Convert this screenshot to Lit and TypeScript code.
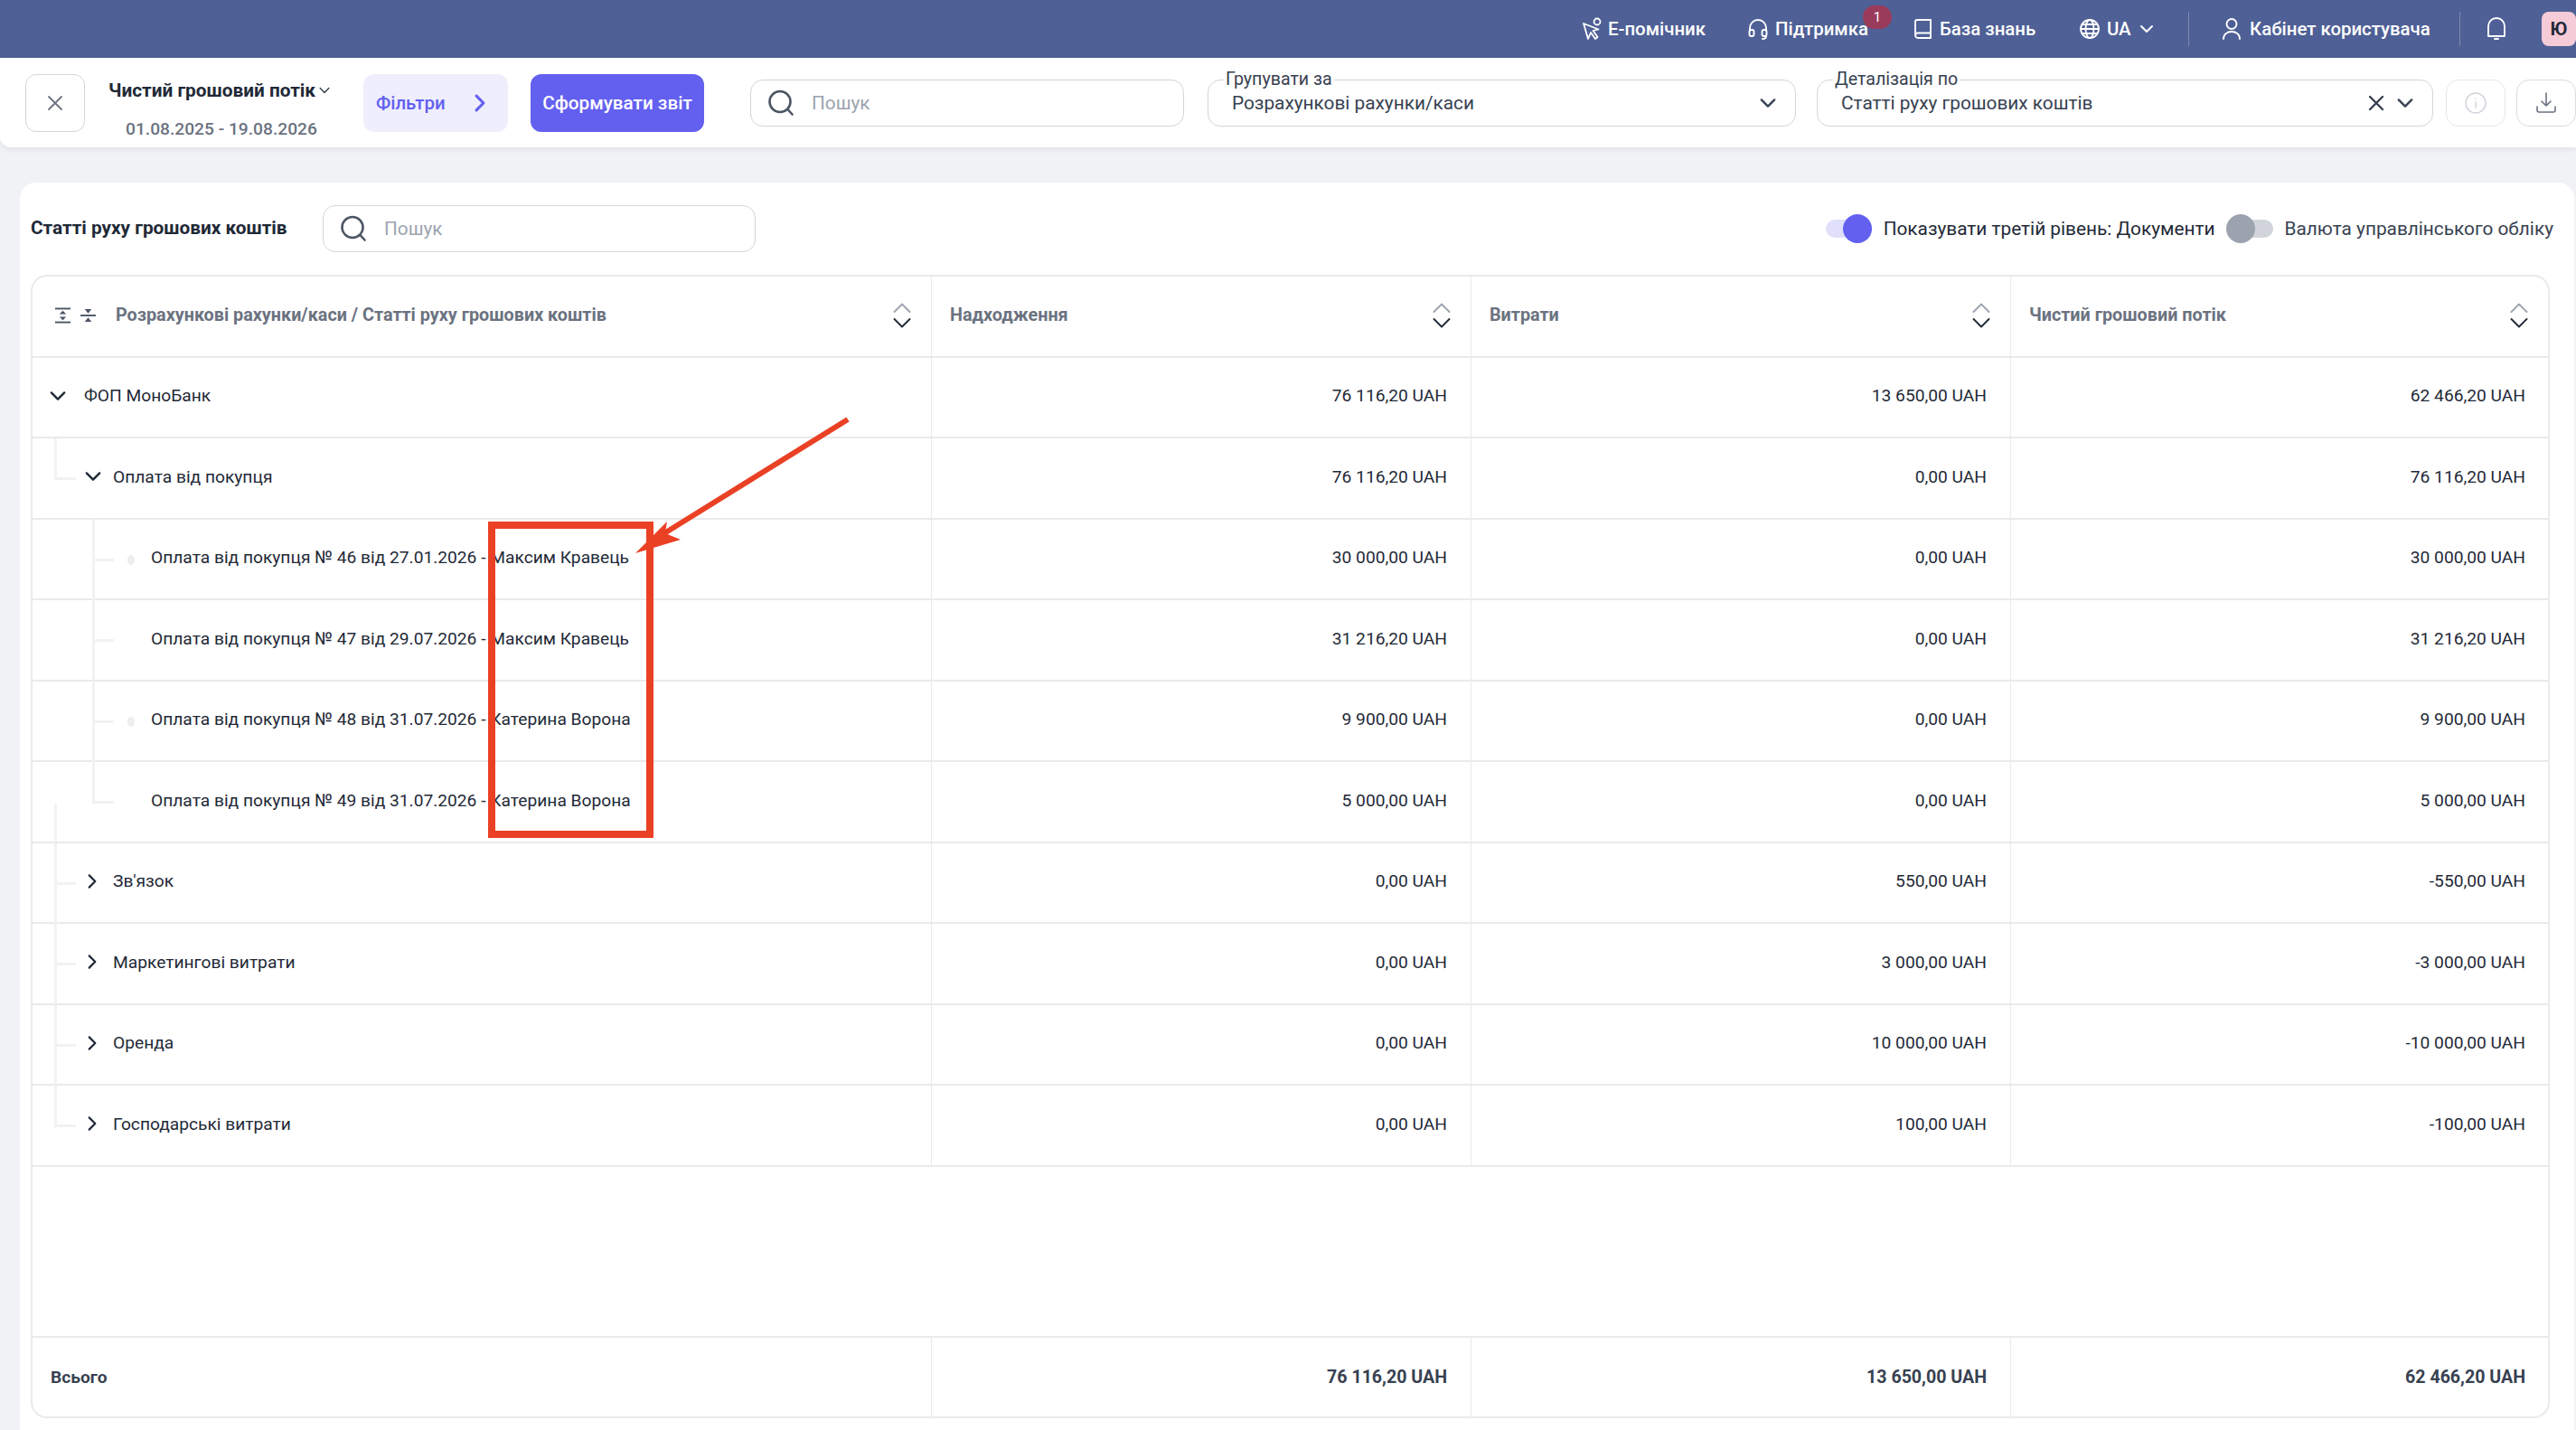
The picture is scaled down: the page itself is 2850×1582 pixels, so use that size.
import { LitElement, html, css, svg } from "lit";
import { customElement } from "lit/decorators.js";

const chevDown = (s = 20, w = 2) => html`<svg class="ic" width=${s} height=${s} viewBox="0 0 20 20" fill="none" stroke="currentColor" stroke-width=${w} stroke-linecap="round" stroke-linejoin="round"><path d="M4 7l6 6 6-6"/></svg>`;
const chevRight = (s = 20, w = 2) => html`<svg class="ic" width=${s} height=${s} viewBox="0 0 20 20" fill="none" stroke="currentColor" stroke-width=${w} stroke-linecap="round" stroke-linejoin="round"><path d="M7 4l6 6-6 6"/></svg>`;
const searchIcon = html`<svg class="ic" width="32" height="32" viewBox="0 0 32 32" fill="none" stroke="#4b5563" stroke-width="2.6" stroke-linecap="round"><circle cx="15" cy="14.5" r="11.5"/><path d="M23.5 23l5 5.5"/></svg>`;
const sortIcon = html`<svg class="ic" width="20" height="28" viewBox="0 0 20 28" fill="none" stroke-width="1.9" stroke-linecap="round" stroke-linejoin="round"><path d="M1.5 10L10 1.500l8.500 8.500" stroke="#9ca3af"/><path d="M1.5 18l8.500 8.500 8.500-8.500" stroke="#1f2937"/></svg>`;

type Row = { label: string; a: string; b: string; c: string; level: number; icon?: "down" | "right"; dot?: boolean };
const rows: Row[] = [
  { label: "ФОП МоноБанк", a: "76 116,20 UAH", b: "13 650,00 UAH", c: "62 466,20 UAH", level: 0, icon: "down" },
  { label: "Оплата від покупця", a: "76 116,20 UAH", b: "0,00 UAH", c: "76 116,20 UAH", level: 1, icon: "down" },
  { label: "Оплата від покупця № 46 від 27.01.2026 - Максим Кравець", a: "30 000,00 UAH", b: "0,00 UAH", c: "30 000,00 UAH", level: 2, dot: true },
  { label: "Оплата від покупця № 47 від 29.07.2026 - Максим Кравець", a: "31 216,20 UAH", b: "0,00 UAH", c: "31 216,20 UAH", level: 2 },
  { label: "Оплата від покупця № 48 від 31.07.2026 - Катерина Ворона", a: "9 900,00 UAH", b: "0,00 UAH", c: "9 900,00 UAH", level: 2, dot: true },
  { label: "Оплата від покупця № 49 від 31.07.2026 - Катерина Ворона", a: "5 000,00 UAH", b: "0,00 UAH", c: "5 000,00 UAH", level: 2 },
  { label: "Зв'язок", a: "0,00 UAH", b: "550,00 UAH", c: "-550,00 UAH", level: 1, icon: "right" },
  { label: "Маркетингові витрати", a: "0,00 UAH", b: "3 000,00 UAH", c: "-3 000,00 UAH", level: 1, icon: "right" },
  { label: "Оренда", a: "0,00 UAH", b: "10 000,00 UAH", c: "-10 000,00 UAH", level: 1, icon: "right" },
  { label: "Господарські витрати", a: "0,00 UAH", b: "100,00 UAH", c: "-100,00 UAH", level: 1, icon: "right" },
];

@customElement("app-root")
export class AppRoot extends LitElement {
  static styles = css`
    :host { display: block; width: 2850px; height: 1582px; overflow: hidden; position: relative; background: #f1f2f5; font-family: Roboto, "Noto Sans", sans-serif; color: #1f2937; }
    * { box-sizing: border-box; }
    .ic { display: block; flex: none; }
    .top { height: 64px; background: #4f6096; color: #fff; display: flex; align-items: center; font-size: 20.4px; font-weight: 500; padding-left: 1750px; }
    .ti { display: flex; align-items: center; position: relative; white-space: nowrap; flex: none; height: 28px; }
    .ti .ic { margin-right: 7px; }
    .ti .ic.tight { margin-right: 5px; }
    .ti .ic.wide { margin-right: 9px; }
    .w183 { width: 183px; }
    .w184 { width: 184px; }
    .w121 { width: 121px; }
    .w263 { width: 263px; margin-left: 36px; }
    .bell { margin-left: 29px; width: 22px; }
    .bell .ic { margin: 0; }
    .uachev { margin-left: 7px; }
    .badge { position: absolute; top: -12px; left: 128px; width: 32px; height: 26px; border-radius: 13px; background: #9a3b5b; font-size: 15px; font-weight: 400; display: flex; align-items: center; justify-content: center; color: #fff; }
    .vsep { width: 1px; height: 38px; background: #7d8ab0; flex: none; }
    .ava { width: 38px; height: 38px; margin-left: 39px; border-radius: 8px; background: #f6cbd8; color: #1f2937; font-weight: 700; font-size: 20px; display: flex; align-items: center; justify-content: center; flex: none; }
    .bar { height: 99px; background: #fff; border-radius: 0 0 0 12px; box-shadow: 0 2px 6px rgba(20,30,60,.08); display: flex; align-items: center; padding-left: 28px; position: relative; }
    .iconbtn { width: 66px; height: 64px; border: 1px solid #d1d5db; border-radius: 12px; display: flex; align-items: center; justify-content: center; flex: none; }
    .ttl { width: 308px; padding-left: 26px; margin-top: 12px; flex: none; }
    .ttl b { font-size: 20.8px; font-weight: 700; display: flex; align-items: center; gap: 2px; white-space: nowrap; color: #1f2937; height: 30px; }
    .ttl b span { color: #374151; }
    .ttl div { font-size: 19.2px; margin-top: 16px; color: #6b7280; font-weight: 500; padding-left: 19px; white-space: nowrap; height: 24px; line-height: 24px; }
    .filters { width: 160px; height: 64px; border-radius: 12px; background: #efeefc; color: #6360f0; display: flex; align-items: center; justify-content: space-between; padding: 0 18px 0 14px; font-size: 20.4px; font-weight: 500; flex: none; }
    .go { margin-left: 25px; width: 192px; height: 64px; border-radius: 12px; background: #6360f0; color: #fff; display: flex; align-items: center; justify-content: center; font-size: 20.7px; font-weight: 500; flex: none; }
    .search { border: 1px solid #d1d5db; border-radius: 14px; height: 52px; display: flex; align-items: center; padding-left: 17px; gap: 18px; color: #9ca3af; font-size: 20.8px; flex: none; background: #fff; }
    .s1 { margin-left: 51px; width: 480px; }
    .s2 { width: 479px; }
    .sel { position: relative; height: 52px; border: 1px solid #d1d5db; border-radius: 14px; display: flex; align-items: center; padding: 0 18px 0 26px; font-size: 20.8px; color: #374151; flex: none; justify-content: space-between; }
    .sel1 { margin-left: 26px; width: 651px; }
    .sel2 { margin-left: 23px; width: 682px; }
    .sel label { position: absolute; top: -13px; left: 17px; background: #fff; padding: 0 2px; font-size: 19.6px; line-height: 24px; color: #374151; }
    .r { display: flex; align-items: center; gap: 10px; }
    .small { width: 66px; height: 52px; border: 1px solid #e5e7eb; border-radius: 14px; display: flex; align-items: center; justify-content: center; flex: none; }
    .info { margin-left: 14px; }
    .dl { margin-left: 12px; border-color: #d9dce0; }
    .card { position: absolute; left: 22px; top: 202px; width: 2826px; height: 1400px; background: #fff; border-radius: 18px; padding: 0 23px 0 12px; }
    .chead { height: 102px; display: flex; align-items: center; }
    .chead h2 { font-size: 20.8px; margin: 0 0 2px; font-weight: 700; color: #1f2937; width: 323px; white-space: nowrap; }
    .toggles { margin-left: auto; display: flex; align-items: center; font-size: 20.8px; }
    .tg { display: block; position: relative; width: 51px; height: 32px; flex: none; }
    .tg i { position: absolute; top: 6px; left: 0; right: 0; height: 20px; border-radius: 10px; background: #e0e0fb; }
    .tg u { position: absolute; top: 0; right: 0; width: 32px; height: 32px; border-radius: 50%; background: #6360f0; }
    .tg.off { width: 52px; margin-left: 13px; }
    .tg.off i { background: #d1d5db; }
    .tg.off u { right: auto; left: 0; background: #9ca3af; }
    .tl1 { margin-left: 13px; color: #1f2937; }
    .tl2 { margin-left: 12px; color: #374151; }
    .table { width: 2787px; height: 1265px; border: 2px solid #e9eaed; border-radius: 18px; display: flex; flex-direction: column; overflow: hidden; }
    .row { display: grid; grid-template-columns: 994px 597px 597px 1fr; border-bottom: 2px solid #e9eaed; height: 89.5px; flex: none; }
    .row > div { display: flex; align-items: center; border-left: 1px solid #e9eaed; padding: 0 26px 3px 20px; font-size: 19.2px; color: #1f2937; justify-content: flex-end; white-space: nowrap; }
    .row > div:last-child { padding-right: 25px; }
    .row > div:first-child { border-left: none; justify-content: flex-start; position: relative; padding: 0 0 3px; }
    .row.head > div { justify-content: space-between; font-weight: 700; color: #6b7280; font-size: 19.8px; padding-right: 22px; padding-bottom: 2px; }
    .row.head > div:first-child { padding-left: 25px; padding-right: 22px; justify-content: flex-start; gap: 22px; }
    .hicons { display: flex; gap: 11px; flex: none; }
    .hsort { margin-left: auto; display: flex; }
    .spacer { flex: 1; }
    .row.foot { border-bottom: none; border-top: 2px solid #e9eaed; height: 89px; }
    .row.foot > div { font-weight: 700; color: #374151; font-size: 19.6px; padding-bottom: 0; }
    .row.foot > div:first-child { padding-left: 20px; font-size: 19.2px; padding-bottom: 0; }
    .tree { position: absolute; background: #f1f2f4; }
    .tv { width: 3px; top: 0; height: 89px; }
    .tv.half { height: 46px; }
    .tv.low { top: 46px; height: 43px; }
    .th { top: 43px; height: 3px; width: 24px; }
    .x24 { left: 24px; }
    .x66 { left: 66px; }
    .dot { position: absolute; width: 8px; height: 11px; border-radius: 50%; background: #eceef0; left: 105px; top: 39px; }
    .cell { display: flex; align-items: center; }
    .c0 { padding-left: 16px; }
    .c1 { padding-left: 55px; }
    .c2 { padding-left: 131px; }
    .chev { color: #1f2937; display: flex; width: 24px; flex: none; }
    .c0 .lbl { margin-left: 17px; }
    .c1 .lbl { margin-left: 10px; }
    .overlay { position: absolute; left: 0; top: 0; pointer-events: none; }
  `;

  private tree(r: Row, i: number) {
    if (r.level === 1) {
      const end = i === 1 || i === 9;
      return html`<span class="tree tv x24 ${end ? "half" : ""}"></span><span class="tree th x24"></span>`;
    }
    if (r.level === 2) {
      return html`<span class="tree tv x66 ${i === 5 ? "half" : ""}"></span><span class="tree th x66"></span>
        ${r.dot ? html`<span class="dot"></span>` : ""}
        ${i === 5 ? html`<span class="tree tv low x24"></span>` : ""}`;
    }
    return "";
  }

  private cell(r: Row) {
    if (r.level === 2) return html`<span class="cell c2">${r.label}</span>`;
    return html`<span class="cell ${r.level === 0 ? "c0" : "c1"}">
      <span class="chev">${r.icon === "down" ? chevDown(24, 2) : chevRight(22, 2)}</span>
      <span class="lbl">${r.label}</span>
    </span>`;
  }

  render() {
    return html`
      <div class="top">
        <div class="ti w183"><svg class="ic tight" width="24" height="28" viewBox="0 0 24 28" fill="none" stroke="#fff" stroke-width="1.8" stroke-linejoin="round"><path d="M2 8l5 17 3-7 5 7 2.5-2-5-7 6-1.5z"/><circle cx="17" cy="6" r="3.5"/></svg>Е-помічник</div>
        <div class="ti w184"><svg class="ic" width="24" height="26" viewBox="0 0 24 26" fill="none" stroke="#fff" stroke-width="1.9" stroke-linecap="round"><path d="M3 15v-3a9 9 0 0118 0v3"/><rect x="2.5" y="14" width="5" height="7" rx="2"/><rect x="16.5" y="14" width="5" height="7" rx="2"/><path d="M21 21c0 2-1.5 3-4 3"/></svg>Підтримка<span class="badge">1</span></div>
        <div class="ti w183"><svg class="ic" width="22" height="26" viewBox="0 0 22 26" fill="none" stroke="#fff" stroke-width="1.9" stroke-linejoin="round"><path d="M2 20V5a2 2 0 012-2h15v20H5a3 3 0 01-3-3zM2 20a3 3 0 013-2.5h14"/></svg>База знань</div>
        <div class="ti w121"><svg class="ic" width="24" height="24" viewBox="0 0 24 24" fill="none" stroke="#fff" stroke-width="1.8"><circle cx="12" cy="12" r="10"/><ellipse cx="12" cy="12" rx="4.5" ry="10"/><path d="M2 12h20M3.5 7h17M3.500 17h17"/></svg>UA<span class="uachev">${chevDown(20, 2)}</span></div>
        <div class="vsep"></div>
        <div class="ti w263"><svg class="ic wide" width="22" height="26" viewBox="0 0 22 26" fill="none" stroke="#fff" stroke-width="1.9" stroke-linecap="round"><circle cx="11" cy="7.5" r="5.5"/><path d="M2 24c0-5 4-8 9-8s9 3 9 8"/></svg>Кабінет користувача</div>
        <div class="vsep"></div>
        <div class="ti bell"><svg class="ic" width="22" height="26" viewBox="0 0 22 26" fill="none" stroke="#fff" stroke-width="1.9" stroke-linejoin="round"><path d="M2 21V10a9 9 0 0118 0v11z"/><path d="M9 24h4" stroke-linecap="round"/></svg></div>
        <div class="ava">Ю</div>
      </div>
      <div class="bar">
        <div class="iconbtn"><svg class="ic" width="20" height="20" viewBox="0 0 20 20" fill="none" stroke="#6b7280" stroke-width="1.8" stroke-linecap="round"><path d="M3 3l14 14M17 3L3 17"/></svg></div>
        <div class="ttl"><b>Чистий грошовий потік<span>${chevDown(16, 1.8)}</span></b><div>01.08.2025 - 19.08.2026</div></div>
        <div class="filters">Фільтри ${chevRight(26, 2.4)}</div>
        <div class="go">Сформувати звіт</div>
        <div class="search s1">${searchIcon}Пошук</div>
        <div class="sel sel1"><label>Групувати за</label>Розрахункові рахунки/каси${chevDown(24, 2)}</div>
        <div class="sel sel2"><label>Деталізація по</label>Статті руху грошових коштів
          <span class="r"><svg class="ic" width="20" height="20" viewBox="0 0 20 20" fill="none" stroke="#374151" stroke-width="2.4" stroke-linecap="round"><path d="M3 3l14 14M17 3L3 17"/></svg>${chevDown(24, 2)}</span></div>
        <div class="small info"><svg class="ic" width="24" height="24" viewBox="0 0 24 24" fill="none" stroke="#d1d5db" stroke-width="1.5" stroke-linecap="round"><circle cx="12" cy="12" r="11"/><path d="M12 11v6M12 7v.5"/></svg></div>
        <div class="small dl"><svg class="ic" width="24" height="24" viewBox="0 0 24 24" fill="none" stroke="#6b7280" stroke-width="1.6" stroke-linecap="round" stroke-linejoin="round"><path d="M12 1v14M7 10l5 5 5-5M2 16v4a2 2 0 002 2h16a2 2 0 002-2v-4"/></svg></div>
      </div>
      <div class="card">
        <div class="chead">
          <h2>Статті руху грошових коштів</h2>
          <div class="search s2">${searchIcon}Пошук</div>
          <div class="toggles">
            <span class="tg"><i></i><u></u></span>
            <span class="tl1">Показувати третій рівень: Документи</span>
            <span class="tg off"><i></i><u></u></span>
            <span class="tl2">Валюта управлінського обліку</span>
          </div>
        </div>
        <div class="table">
          <div class="row head">
            <div><span class="hicons"><svg class="ic" width="17" height="18" viewBox="0 0 18 18" fill="#4b5563"><rect y="0" width="18" height="2"/><rect y="16" width="18" height="2"/><path d="M9 3.5l4 4H5zM9 14.5l-4-4h8z"/></svg><svg class="ic" width="17" height="18" viewBox="0 0 18 18" fill="#4b5563"><rect y="8" width="18" height="2"/><path d="M9 6.5l-4-5h8zM9 11.5l4 5H5z"/></svg></span>Розрахункові рахунки/каси / Статті руху грошових коштів<span class="hsort">${sortIcon}</span></div>
            <div>Надходження ${sortIcon}</div>
            <div>Витрати ${sortIcon}</div>
            <div>Чистий грошовий потік ${sortIcon}</div>
          </div>
          ${rows.map((r, i) => html`
            <div class="row">
              <div>${this.tree(r, i)}${this.cell(r)}</div>
              <div>${r.a}</div><div>${r.b}</div><div>${r.c}</div>
            </div>`)}
          <div class="spacer"></div>
          <div class="row foot">
            <div>Всього</div><div>76 116,20 UAH</div><div>13 650,00 UAH</div><div>62 466,20 UAH</div>
          </div>
        </div>
      </div>
      <svg class="overlay" width="2850" height="1582" viewBox="0 0 2850 1582" fill="none">
        ${svg`<rect x="544" y="581" width="175" height="342" stroke="#ea4125" stroke-width="8"/>
        <path d="M938 464L735 590" stroke="#ea4125" stroke-width="6"/>
        <path d="M703 612L738 577L736 590L753 597z" fill="#ea4125"/>`}
      </svg>
    `;
  }
}
